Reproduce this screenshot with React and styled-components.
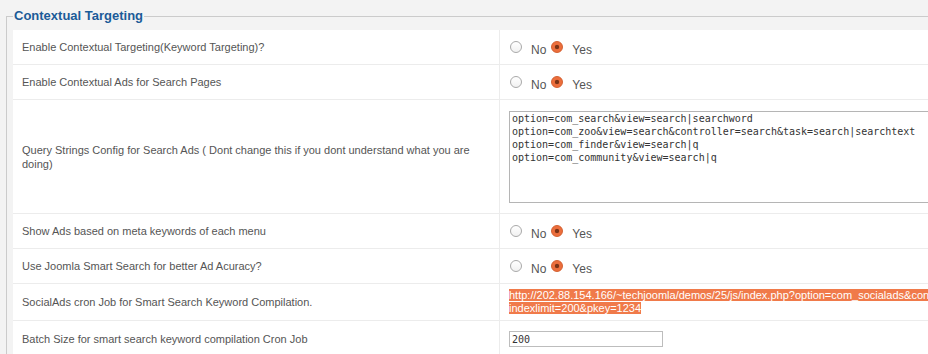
import React from "react";
import styled, { createGlobalStyle } from "styled-components";

const GlobalStyle = createGlobalStyle`
  html, body {
    margin: 0;
    padding: 0;
    overflow: hidden;
    background: #f3f3f3;
  }
  body {
    width: 928px;
    height: 354px;
    font-family: "Liberation Sans", Arial, sans-serif;
  }
`;

const Fieldset = styled.fieldset`
  margin: 8px 0 0 6px;
  padding: 6px 0 0 6px;
  border: 1px solid #cbcbcb;
  width: 1100px;
  min-width: 0;
  box-sizing: border-box;
`;

const Legend = styled.legend`
  padding: 0 1px;
  font-size: 13px;
  font-weight: bold;
  line-height: 16px;
  color: #1b5b98;
`;

const Panel = styled.div`
  background: #fff;
`;

const Row = styled.div`
  display: grid;
  grid-template-columns: 487px 1fr;
  border-bottom: 1px solid #ececec;
`;

const Label = styled.div`
  box-sizing: border-box;
  display: flex;
  align-items: center;
  padding: 0 4px 0 9px;
  border-right: 1px solid #ececec;
  color: #555;
  font-size: 11px;
  line-height: ${(p) => p.$lh || "18px"};
`;

const Value = styled.div`
  padding: ${(p) => p.$pt ?? 8}px 9px ${(p) => p.$pb ?? 8}px;
  overflow: hidden;
`;

const RadioGroup = styled.div`
  display: flex;
  align-items: flex-start;
  height: 18px;
  font-size: 12px;
  line-height: 18px;
  color: #555;
`;

const Radio = styled.input.attrs({ type: "radio" })`
  appearance: none;
  -webkit-appearance: none;
  box-sizing: border-box;
  width: 12px;
  height: 12px;
  margin: 3px 9px 0 ${(p) => (p.$first ? 1 : 5)}px;
  border-radius: 50%;
  border: 1px solid #a9a9a9;
  background: linear-gradient(#ffffff, #f1f1f1);
  &:checked {
    border-color: #d35e2e;
    background: radial-gradient(circle, #7b3316 0 1.8px, #ec6e3c 2.6px);
  }
`;

const RadioText = styled.span`
  margin-top: 3px;
`;

const CodeArea = styled.textarea`
  display: block;
  box-sizing: border-box;
  width: 480px;
  height: 92px;
  margin: 0;
  padding: 0 2px;
  border: 1px solid #b5b5b5;
  resize: none;
  font-family: "DejaVu Sans Mono", monospace;
  font-size: 10px;
  line-height: 13px;
  color: #333;
  background: #fff;
  outline: none;
`;

const Selected = styled.div`
  font-size: 11px;
  line-height: 13px;
  white-space: nowrap;
  span {
    background: #f07a4a;
    color: #fff;
  }
`;

const TextInput = styled.input`
  display: block;
  box-sizing: border-box;
  width: 154px;
  height: 16px;
  margin: 0;
  padding: 0 2px;
  border: 1px solid #bdbdbd;
  font-family: "DejaVu Sans Mono", monospace;
  font-size: 10px;
  color: #333;
  outline: none;
`;

function YesNo({ name }) {
  return (
    <RadioGroup>
      <Radio name={name} $first />
      <RadioText>No</RadioText>
      <Radio name={name} defaultChecked />
      <RadioText>Yes</RadioText>
    </RadioGroup>
  );
}

const queryText = `option=com_search&view=search|searchword
option=com_zoo&view=search&controller=search&task=search|searchtext
option=com_finder&view=search|q
option=com_community&view=search|q`;

export default function App() {
  return (
    <>
      <GlobalStyle />
      <Fieldset>
        <Legend>Contextual Targeting</Legend>
        <Panel>
          <Row>
            <Label>Enable Contextual Targeting(Keyword Targeting)?</Label>
            <Value>
              <YesNo name="ct" />
            </Value>
          </Row>
          <Row>
            <Label>Enable Contextual Ads for Search Pages</Label>
            <Value>
              <YesNo name="cs" />
            </Value>
          </Row>
          <Row>
            <Label $lh="14px">
              Query Strings Config for Search Ads ( Dont change this if you dont understand what you are doing)
            </Label>
            <Value $pt={11} $pb={10}>
              <CodeArea defaultValue={queryText} spellCheck={false} />
            </Value>
          </Row>
          <Row>
            <Label>Show Ads based on meta keywords of each menu</Label>
            <Value>
              <YesNo name="mk" />
            </Value>
          </Row>
          <Row>
            <Label>Use Joomla Smart Search for better Ad Acuracy?</Label>
            <Value>
              <YesNo name="ss" />
            </Value>
          </Row>
          <Row>
            <Label>SocialAds cron Job for Smart Search Keyword Compilation.</Label>
            <Value $pt={5} $pb={5}>
              <Selected>
                <span>
                  http://202.88.154.166/~techjoomla/demos/25/js/index.php?option=com_socialads&controller=cron&task=makeIndexes&
                </span>
                <br />
                <span>indexlimit=200&pkey=1234</span>
              </Selected>
            </Value>
          </Row>
          <Row>
            <Label>Batch Size for smart search keyword compilation Cron Job</Label>
            <Value $pt={10} $pb={10}>
              <TextInput defaultValue="200" />
            </Value>
          </Row>
        </Panel>
      </Fieldset>
    </>
  );
}
